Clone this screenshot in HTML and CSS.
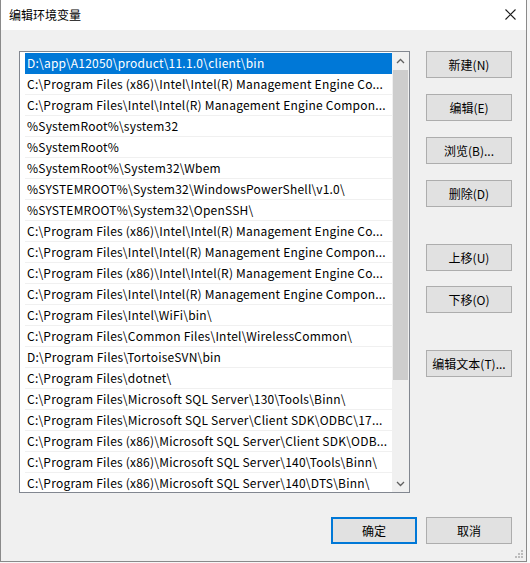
FILE: index.html
```html
<!DOCTYPE html>
<html lang="zh-CN">
<head>
<meta charset="utf-8">
<title>编辑环境变量</title>
<link rel="stylesheet" href="styles.css">
</head>
<body>
<div class="dialog">
  <div class="titlebar">
    <span class="title">编辑环境变量</span>
    <svg class="close" width="11" height="11" viewBox="0 0 11 11"><path d="M0.5 0.5 L10.5 10.5 M10.5 0.5 L0.5 10.5" stroke="#1a1a1a" stroke-width="1.1" fill="none"/></svg>
  </div>
  <div class="body">
    <div class="main">
      <div class="listbox">
        <div class="rows">
          <div class="row selected">D:\app\A12050\product\11.1.0\client\bin</div>
          <div class="row">C:\Program Files (x86)\Intel\Intel(R) Management Engine Co...</div>
          <div class="row">C:\Program Files\Intel\Intel(R) Management Engine Compon...</div>
          <div class="row">%SystemRoot%\system32</div>
          <div class="row">%SystemRoot%</div>
          <div class="row">%SystemRoot%\System32\Wbem</div>
          <div class="row">%SYSTEMROOT%\System32\WindowsPowerShell\v1.0\</div>
          <div class="row">%SYSTEMROOT%\System32\OpenSSH\</div>
          <div class="row">C:\Program Files (x86)\Intel\Intel(R) Management Engine Co...</div>
          <div class="row">C:\Program Files\Intel\Intel(R) Management Engine Compon...</div>
          <div class="row">C:\Program Files (x86)\Intel\Intel(R) Management Engine Co...</div>
          <div class="row">C:\Program Files\Intel\Intel(R) Management Engine Compon...</div>
          <div class="row">C:\Program Files\Intel\WiFi\bin\</div>
          <div class="row">C:\Program Files\Common Files\Intel\WirelessCommon\</div>
          <div class="row">D:\Program Files\TortoiseSVN\bin</div>
          <div class="row">C:\Program Files\dotnet\</div>
          <div class="row">C:\Program Files\Microsoft SQL Server\130\Tools\Binn\</div>
          <div class="row">C:\Program Files\Microsoft SQL Server\Client SDK\ODBC\17...</div>
          <div class="row">C:\Program Files (x86)\Microsoft SQL Server\Client SDK\ODB...</div>
          <div class="row">C:\Program Files (x86)\Microsoft SQL Server\140\Tools\Binn\</div>
          <div class="row">C:\Program Files (x86)\Microsoft SQL Server\140\DTS\Binn\</div>
        </div>
        <div class="scrollbar">
          <div class="arrow">
            <svg width="9" height="6" viewBox="0 0 9 6"><path d="M1 5 L4.5 1.5 L8 5" stroke="#606060" stroke-width="1.3" fill="none"/></svg>
          </div>
          <div class="track">
            <div class="thumb"></div>
          </div>
          <div class="arrow">
            <svg width="9" height="6" viewBox="0 0 9 6"><path d="M1 1 L4.5 4.5 L8 1" stroke="#606060" stroke-width="1.3" fill="none"/></svg>
          </div>
        </div>
      </div>
      <div class="side">
        <div class="group">
          <button class="btn">新建(N)</button>
          <button class="btn">编辑(E)</button>
          <button class="btn">浏览(B)...</button>
          <button class="btn">删除(D)</button>
        </div>
        <div class="group move">
          <button class="btn">上移(U)</button>
          <button class="btn">下移(O)</button>
        </div>
        <div class="group text">
          <button class="btn">编辑文本(T)...</button>
        </div>
      </div>
    </div>
    <div class="footer">
      <button class="btn default">确定</button>
      <button class="btn">取消</button>
    </div>
  </div>
  <svg class="grip" width="8" height="8" viewBox="0 0 8 8">
    <rect x="6" y="0" width="2" height="2" fill="#bcbcbc"/>
    <rect x="3" y="3" width="2" height="2" fill="#bcbcbc"/>
    <rect x="6" y="3" width="2" height="2" fill="#bcbcbc"/>
    <rect x="0" y="6" width="2" height="2" fill="#bcbcbc"/>
    <rect x="3" y="6" width="2" height="2" fill="#bcbcbc"/>
    <rect x="6" y="6" width="2" height="2" fill="#bcbcbc"/>
  </svg>
</div>
</body>
</html>
```
FILE: styles.css
```css
html, body {
  margin: 0;
  padding: 0;
}
body {
  width: 530px;
  height: 563px;
  background: #f7f7f7;
  font-family: "Noto Sans CJK SC", "Noto Sans", sans-serif;
  font-size: 12px;
  color: #000;
  overflow: hidden;
}
.dialog {
  position: relative;
  box-sizing: border-box;
  width: 527px;
  height: 562px;
  background: #f0f0f0;
  border: 1px solid #8a8a8a;
  border-top: none;
}
.titlebar {
  height: 30px;
  background: #fff;
  display: flex;
  align-items: center;
  justify-content: space-between;
  padding: 0 10px 0 8px;
}
.title {
  font-size: 12px;
  color: #000;
  margin-top: -1px;
}
.close {
  display: block;
  margin-top: -2px;
}
.body {
  padding: 21px 0 0 18px;
}
.main {
  display: flex;
  align-items: flex-start;
}
.listbox {
  box-sizing: border-box;
  width: 391px;
  height: 442px;
  border: 1px solid #828790;
  background: #fff;
  display: flex;
  padding-left: 5px;
}
.rows {
  flex: 1;
  overflow: hidden;
  padding-top: 1px;
}
.row {
  height: 20px;
  line-height: 20px;
  border-bottom: 1px solid #f0f0f0;
  padding-left: 2px;
  white-space: nowrap;
  overflow: hidden;
  letter-spacing: 0.22px;
}
.row.selected {
  background: #0078d7;
  color: #fff;
  border-bottom-color: #0078d7;
}
.scrollbar {
  width: 17px;
  display: flex;
  flex-direction: column;
  background: #f0f0f0;
}
.arrow {
  height: 17px;
  display: flex;
  align-items: center;
  justify-content: center;
}
.track {
  flex: 1;
  padding: 1px 1px 0 1px;
}
.thumb {
  height: 310px;
  background: #cdcdcd;
}
.side {
  margin-left: 16px;
  display: flex;
  flex-direction: column;
}
.group {
  display: flex;
  flex-direction: column;
  gap: 16px;
}
.group.move {
  margin-top: 37px;
  gap: 15px;
}
.group.text {
  margin-top: 37px;
}
.btn {
  box-sizing: border-box;
  width: 86px;
  height: 27px;
  background: #e1e1e1;
  border: 1px solid #adadad;
  font-family: "Noto Sans CJK SC", "Noto Sans", sans-serif;
  font-size: 12px;
  color: #000;
  padding: 0;
  margin: 0;
}
.btn.default {
  border: 2px solid #0078d7;
}
.footer {
  display: flex;
  justify-content: flex-end;
  gap: 9px;
  padding-right: 14px;
  margin-top: 24px;
}
.grip {
  position: absolute;
  right: 3px;
  bottom: 3px;
}
```
